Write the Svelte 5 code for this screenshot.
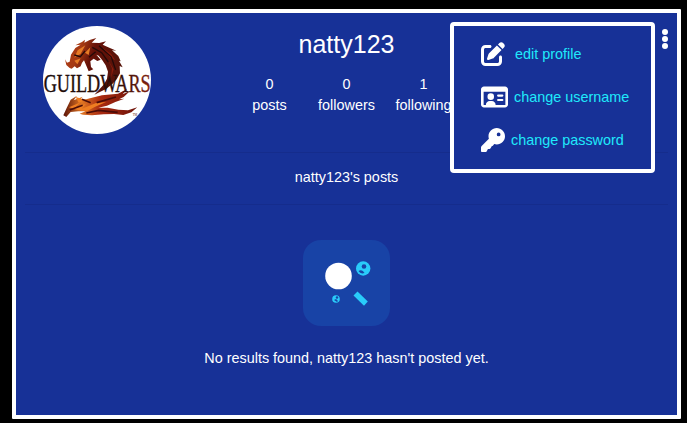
<script>
  const username = 'natty123';
  const stats = [
    { value: 0, label: 'posts' },
    { value: 0, label: 'followers' },
    { value: 1, label: 'following' }
  ];
  const actions = [
    {
      label: 'edit profile',
      width: 24,
      gap: 10,
      box: '0 0 512 512',
      path: 'M471.6 21.7c-21.9-21.9-57.3-21.9-79.2 0L362.3 51.7l97.9 97.9 30.1-30.1c21.9-21.9 21.9-57.3 0-79.2L471.6 21.7zm-299.2 220c-6.1 6.1-10.8 13.6-13.5 21.9l-29.6 88.8c-2.9 8.6-.6 18.1 5.8 24.6s15.9 8.7 24.6 5.8l88.8-29.6c8.2-2.7 15.7-7.4 21.9-13.5L437.7 172.3 339.7 74.3 172.4 241.7zM96 64C43 64 0 107 0 160V416c0 53 43 96 96 96H352c53 0 96-43 96-96V320c0-17.7-14.3-32-32-32s-32 14.3-32 32v96c0 17.7-14.3 32-32 32H96c-17.7 0-32-14.3-32-32V160c0-17.7 14.3-32 32-32h96c17.7 0 32-14.3 32-32s-14.3-32-32-32H96z'
    },
    {
      label: 'change username',
      width: 27,
      gap: 6,
      box: '0 0 576 512',
      path: 'M64 32C29 32 0 61 0 96V416c0 35 29 64 64 64H512c35 0 64-29 64-64V96c0-35-29-64-64-64ZM56 144H520V424H312c0-48-36-84-80-84h-48c-44 0-80 36-80 84H56ZM208 318a70 70 0 1 0 0-140 70 70 0 0 0 0 140ZM364 204a22 22 0 0 0 0 44h92a22 22 0 0 0 0-44ZM364 296a22 22 0 0 0 0 44h92a22 22 0 0 0 0-44Z'
    },
    {
      label: 'change password',
      width: 24,
      gap: 6,
      box: '0 0 512 512',
      path: 'M336 352c97.2 0 176-78.8 176-176S433.2 0 336 0S160 78.8 160 176c0 18.700 2.900 36.800 8.300 53.700L14 384c-9 9-14 20-14 32v72c0 13.300 10.700 24 24 24h72c13.300 0 24-10.700 30-22l22-40c24 0 42-4 56-20l28-46c10 0 18-4 25-11l25.300-29.300c16.900 5.400 35 8.300 53.700 8.300zM376 96a40 40 0 1 1 0 80 40 40 0 1 1 0-80z'
    }
  ];
</script>

<div class="page">
  <main class="card">
    <header>
      <svg class="avatar" viewBox="24 18 324 324" aria-label="Guild Wars 2">
        <defs>
          <linearGradient id="ember" x1="0" y1="0" x2="1" y2="0.4">
            <stop offset="0" stop-color="#b23a12" />
            <stop offset=".3" stop-color="#a53a14" />
            <stop offset=".5" stop-color="#661108" />
            <stop offset="1" stop-color="#55140a" />
          </linearGradient>
          <linearGradient id="flame">
            <stop offset="0" stop-color="#5c1408" />
            <stop offset=".25" stop-color="#df7624" />
            <stop offset=".5" stop-color="#a92a10" />
            <stop offset="1" stop-color="#6c1209" />
          </linearGradient>
          <linearGradient id="letters">
            <stop offset="0" stop-color="#1d0b08" />
            <stop offset=".7" stop-color="#2b0d08" />
            <stop offset="1" stop-color="#86200e" />
          </linearGradient>
        </defs>
        <rect x="24" y="18" width="324" height="324" fill="#fff" />
        <path fill="url(#ember)" d="M90 118L96 128 104 125 108 104 121 84 137 74 121 76 141 66 150 59 148 68 164 60 184 54 170 68 193 69 213 64 203 74 223 83 244 92 231 91 250 108 257 124 252 122 263 142 254 138 255 160 245 178 232 192 213 207 196 215 178 224 192 209 207 193 216 176 219 155 212 136 202 121 191 107 184 104 197 119 187 123 176 116 166 124 168 141 175 148 161 154 153 135 147 121 141 128 137 139 126 145 119 139 110 146 104 144 94 135Z" />
        <path d="M128 91L151 76 137 101 118 113ZM150 98L166 82 161 105ZM118 122L137 115 127 133Z" fill="#e67b26" />
        <path d="M202 83L228 101 241 121 224 112ZM218 118L236 148 228 174 231 145Z" fill="#8a1c0c" />
        <path d="M172 82L200 98 220 126M192 77L229 111 242 150M118 105L136 110 150 93M182 95L162 112" fill="none" stroke="#260a08" stroke-width="4" />
        <path d="M85 286L95 264 107 239 126 227 116 241 143 230 132 243 165 235 201 226 249 221 276 207 263 223 285 213 266 231 252 238 268 236 241 246 216 257 190 263 218 263 250 269 279 271 307 262 289 277 265 285 237 282 206 283 171 286 144 284 134 281 152 274 130 274 107 276 94 291Z" fill="url(#flame)" />
        <path d="M102 262L137 247 119 265 153 251 139 267 183 249 213 246 179 261 157 273 125 269ZM122 231L153 240 131 248Z" fill="#ef7e22" />
        <path d="M104 270L143 256M154 279L191 271 248 277M185 248L243 231M141 238L167 248" fill="none" stroke="#4a0c08" stroke-width="5" />
        <text x="26" y="217" textLength="321" lengthAdjust="spacingAndGlyphs" fill="url(#letters)" stroke="url(#letters)">GUILDWARS</text>
        <text class="tm" x="293" y="287">TM</text>
      </svg>
      <section class="summary">
        <h1>{username}</h1>
        <div class="stats">
          {#each stats as stat}
            <div class="stat"><span>{stat.value}</span><span>{stat.label}</span></div>
          {/each}
        </div>
      </section>
      <svg class="dots" viewBox="0 0 6 20" aria-label="menu">
        <circle cx="3" cy="3" r="3" /><circle cx="3" cy="10" r="3" /><circle cx="3" cy="17" r="3" />
      </svg>
    </header>
    <p class="heading">{username}'s posts</p>
    <section class="empty">
      <svg class="search" viewBox="0 0 87 86">
        <rect width="87" height="86" rx="18" fill="#1843a6" />
        <circle cx="35.5" cy="36" r="13.3" fill="#fff" />
        <circle cx="60.2" cy="28.5" r="7.2" fill="#29ccfa" />
        <circle cx="61" cy="26.5" r="2.3" fill="#1843a6" />
        <path d="M55.5 31q4-2 6 2q-4 1.5-6-2Z" fill="#1843a6" />
        <circle cx="33" cy="59" r="3.8" fill="#29ccfa" />
        <circle cx="34" cy="57.5" r="1.2" fill="#1843a6" />
        <path d="M31 60l2-1 2 2-1 1Z" fill="#1843a6" />
        <path d="M50.5 55.5L54.5 51.5 64.8 61.5 61 65.8Z" fill="#29ccfa" />
      </svg>
      <p>No results found, {username} hasn't posted yet.</p>
    </section>
    <nav class="menu">
      {#each actions as action}
        <a href="#top" style="gap: {action.gap}px">
          <svg viewBox={action.box} width={action.width} height="24"><path fill-rule="evenodd" d={action.path} /></svg>
          <span>{action.label}</span>
        </a>
      {/each}
    </nav>
  </main>
</div>

<style>
  :global(body) { background: #000; }
  .page {
    box-sizing: border-box;
    height: 423px;
    padding: 9px 6px 4px 12px;
    background: #000;
    color: #fff;
    font: 14.4px/21px "Liberation Sans", Arial, sans-serif;
  }
  .card {
    position: relative;
    box-sizing: border-box;
    height: 410px;
    padding: 0 9px;
    border: 4px solid #fff;
    border-radius: 1px;
    background: #173197;
  }
  p, h1 { margin: 0; font-weight: 400; }
  header {
    box-sizing: border-box;
    display: grid;
    grid-template-columns: 108px 1fr 6px;
    height: 140px;
    padding: 13px 0 0 18px;
    border-bottom: 1px solid #152c8c;
  }
  .avatar { width: 108px; height: 108px; border-radius: 50%; }
  .avatar text { font: 74px "Liberation Serif", serif; }
  .avatar .tm { font-size: 9px; fill: #5c1408; }
  .summary { display: flex; flex-direction: column; align-items: center; padding-right: 120px; }
  h1 { font-size: 25px; line-height: 36px; }
  .stats { display: grid; grid-template-columns: repeat(3, 77px); padding-top: 12px; }
  .stat { display: flex; flex-direction: column; align-items: center; }
  .dots { width: 6px; height: 20px; margin-top: 3px; fill: #fff; }
  .heading {
    box-sizing: border-box;
    height: 52px;
    padding-top: 14px;
    border-bottom: 1px solid #152c8c;
    text-align: center;
  }
  .empty { display: flex; flex-direction: column; align-items: center; padding-top: 35px; gap: 22px; }
  .search { width: 87px; height: 86px; }
  .menu {
    position: absolute;
    top: 9px;
    left: 434px;
    box-sizing: border-box;
    display: flex;
    flex-direction: column;
    gap: 19px;
    width: 205px;
    height: 151px;
    padding: 16px 0 0 27px;
    border: 4px solid #fff;
    border-radius: 4px;
    background: #173197;
  }
  .menu a { display: flex; align-items: center; color: #1fe9fb; text-decoration: none; }
  .menu svg { fill: #fff; }
</style>
